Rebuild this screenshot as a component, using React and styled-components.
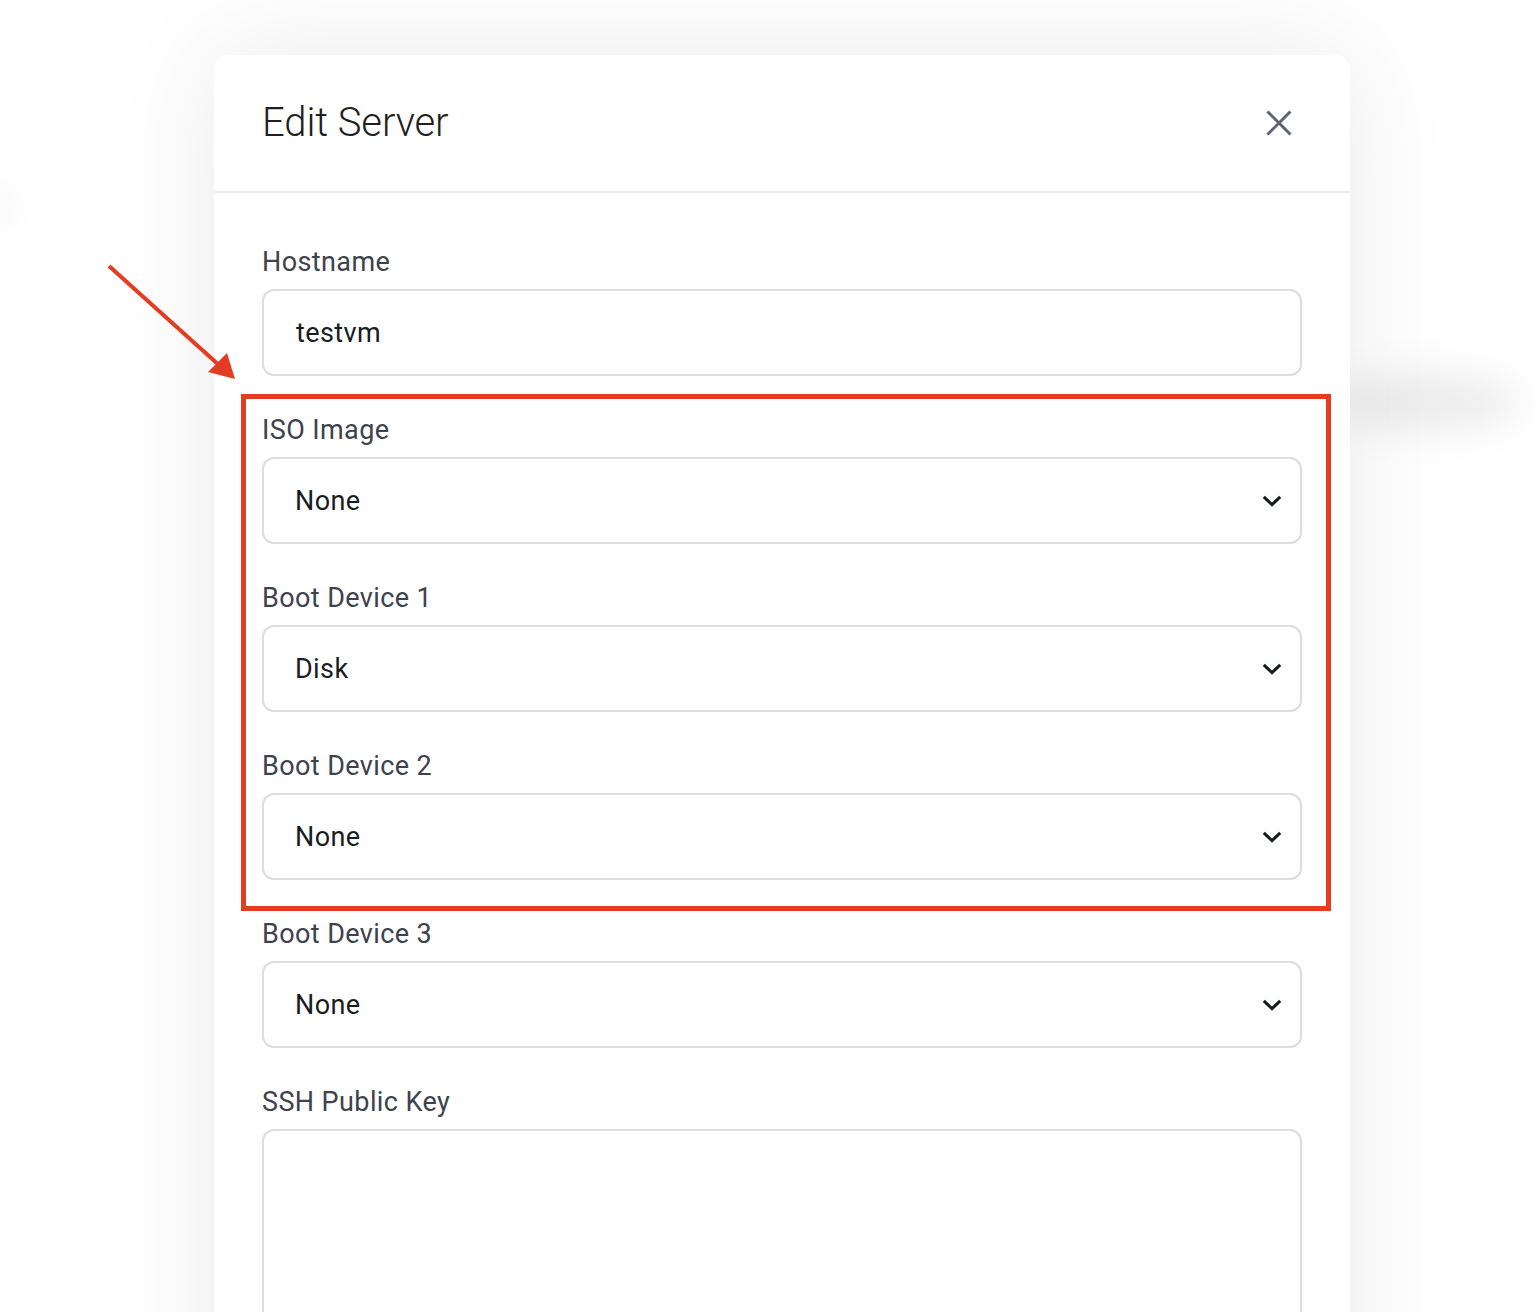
import React from "react"
import styled, { createGlobalStyle } from "styled-components"

const Colors = {
  label: "#3e424c",
  value: "#1b1c1f",
  border: "#dcdce1",
  divider: "#ebebeb",
  mark: "#e43c22",
  icon: "#5e6372"
}

const GlobalStyle = createGlobalStyle`
  html, body {
    margin: 0;
    padding: 0;
    background: #ffffff;
    font-family: Roboto, "Noto Sans", "Liberation Sans", sans-serif;
    overflow: hidden;
  }
  * { box-sizing: border-box; }
`

const Page = styled.div`
  position: relative;
  width: 1540px;
  height: 1312px;
  overflow: hidden;
  padding: 55px 0 0 214px;
`

// soft blurred shapes that sit behind the dialog
const Blob = styled.div`
  position: absolute;
  left: ${p => p.x}px;
  top: ${p => p.y}px;
  width: ${p => p.w}px;
  height: ${p => p.h}px;
  border-radius: 50%;
  background: rgba(0, 0, 0, ${p => p.a});
  filter: blur(${p => p.blur}px);
`

const Modal = styled.section`
  position: relative;
  width: 1136px;
  background: #fff;
  border-radius: 14px;
  box-shadow: 0 0 110px rgba(0, 0, 0, 0.085);
`

const Header = styled.header`
  height: 138px;
  display: flex;
  align-items: center;
  justify-content: space-between;
  padding: 0 58px 0 48px;
  border-bottom: 2px solid ${Colors.divider};
`

const Title = styled.h2`
  margin: 0;
  font-size: 40px;
  line-height: 48px;
  font-weight: 300;
  color: #1f1f21;
  letter-spacing: -0.1px;
`

const CloseButton = styled.button`
  border: 0;
  background: none;
  padding: 0;
  width: 26px;
  height: 26px;
  display: flex;
  align-items: center;
  justify-content: center;
  cursor: pointer;
  margin-top: -1px;
`

const Body = styled.div`
  padding: 53px 48px 0 48px;
  display: flex;
  flex-direction: column;
`

const Field = styled.div`
  display: flex;
  flex-direction: column;
  margin-bottom: 38px;
`

const Label = styled.label`
  font-size: 27px;
  line-height: 32px;
  letter-spacing: 0.4px;
  color: ${Colors.label};
  margin-bottom: 11px;
`

const Input = styled.div`
  height: 87px;
  border: 2px solid ${Colors.border};
  border-radius: 12px;
  display: flex;
  align-items: center;
  justify-content: space-between;
  padding: 1px 18px 0 ${p => p.$pad || 31}px;
  font-size: 27px;
  letter-spacing: 0.4px;
  color: ${Colors.value};
`

const TextArea = styled.div`
  height: 320px;
  border: 2px solid ${Colors.border};
  border-radius: 12px;
`

const Highlight = styled.div`
  position: absolute;
  left: 241px;
  top: 394px;
  width: 1090px;
  height: 517px;
  border: 5px solid ${Colors.mark};
  pointer-events: none;
`

const Arrow = styled.svg`
  position: absolute;
  left: 100px;
  top: 255px;
  pointer-events: none;
`

const Chevron = () => (
  <svg width="20" height="12" viewBox="0 0 20 12" fill="none">
    <polyline points="1.8,1.8 10,9.6 18.2,1.8" stroke={Colors.value} strokeWidth="3" />
  </svg>
)

const CloseIcon = () => (
  <svg width="26" height="26" viewBox="0 0 26 26" fill="none">
    <line x1="1.5" y1="1.5" x2="24.5" y2="24.5" stroke={Colors.icon} strokeWidth="3" />
    <line x1="24.5" y1="1.5" x2="1.5" y2="24.5" stroke={Colors.icon} strokeWidth="3" />
  </svg>
)

const SelectField = ({ label, value }) => (
  <Field>
    <Label>{label}</Label>
    <Input>
      <span>{value}</span>
      <Chevron />
    </Input>
  </Field>
)

export default function App() {
  return (
    <>
      <GlobalStyle />
      <Page>
        <Blob x={1330} y={372} w={190} h={60} a={0.07} blur={18} />
        <Blob x={-30} y={180} w={50} h={50} a={0.02} blur={12} />
        <Modal>
          <Header>
            <Title>Edit Server</Title>
            <CloseButton aria-label="Close">
              <CloseIcon />
            </CloseButton>
          </Header>
          <Body>
            <Field>
              <Label>Hostname</Label>
              <Input $pad={32}>testvm</Input>
            </Field>
            <SelectField label="ISO Image" value="None" />
            <SelectField label="Boot Device 1" value="Disk" />
            <SelectField label="Boot Device 2" value="None" />
            <SelectField label="Boot Device 3" value="None" />
            <Field>
              <Label>SSH Public Key</Label>
              <TextArea />
            </Field>
          </Body>
        </Modal>
        <Highlight />
        <Arrow width="150" height="140" viewBox="0 0 150 140">
          <line x1="9" y1="11" x2="120" y2="111" stroke={Colors.mark} strokeWidth="4" />
          <polygon points="135,124 108,117 127,98" fill={Colors.mark} />
        </Arrow>
      </Page>
    </>
  )
}
